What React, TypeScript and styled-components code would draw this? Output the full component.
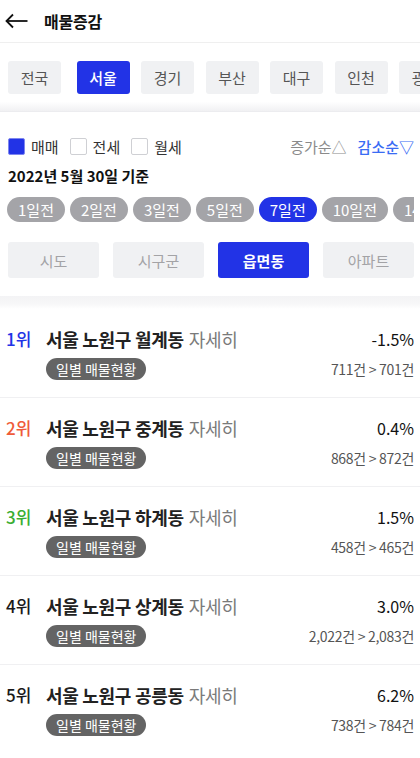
import styled, { createGlobalStyle } from 'styled-components'

const GlobalStyle = createGlobalStyle`
  * {
    box-sizing: border-box;
  }
  body {
    margin: 0;
    background: #fff;
    font-family: "Noto Sans CJK KR", "Noto Sans", sans-serif;
    color: #111;
  }
`

const BLUE = '#2233e6'

const Page = styled.div`
  width: 420px;
  overflow: hidden;
`

const Header = styled.header`
  height: 43px;
  display: flex;
  align-items: center;
  gap: 16px;
  padding: 0 5px;
  border-bottom: 1px solid #efefef;
`

const HeaderTitle = styled.h1`
  margin: 0;
  font-size: 16px;
  font-weight: 700;
  line-height: 1;
  letter-spacing: -0.2px;
`

const RegionList = styled.div`
  display: flex;
  gap: 11.5px;
  padding: 18px 0 0 8px;
  overflow: hidden;

  & > :first-child {
    margin-right: 4px;
  }
`

const RegionTab = styled.div<{ $active?: boolean }>`
  flex: 0 0 53px;
  height: 33px;
  display: flex;
  align-items: center;
  justify-content: center;
  border-radius: 3px;
  font-size: 15px;
  background: ${p => (p.$active ? BLUE : '#f0f1f3')};
  color: ${p => (p.$active ? '#fff' : '#555')};
  font-weight: ${p => (p.$active ? 500 : 400)};
`

const BandTop = styled.div`
  height: 18px;
  background: linear-gradient(#fff 0%, #fff 45%, #f1f1f3 100%);
  border-bottom: 1px solid #ececef;
`

const BandBottom = styled.div`
  height: 13px;
  background: linear-gradient(#f3f3f5 0%, #f7f7f8 60%, #fff 100%);
`

const Filters = styled.section`
  padding: 23px 6px 18px 8px;
`

const FilterRow = styled.div`
  display: flex;
  align-items: center;
  justify-content: space-between;
  height: 22px;
`

const Checks = styled.div`
  display: flex;
  align-items: center;
  gap: 11px;
`

const CheckItem = styled.label`
  display: flex;
  align-items: center;
  gap: 6px;
  font-size: 15px;
  color: #333;
`

const Box = styled.span<{ $checked?: boolean }>`
  width: 17px;
  height: 17px;
  border-radius: 2px;
  border: 1.5px solid ${p => (p.$checked ? '#7e86ef' : '#cfd0d4')};
  background: ${p => (p.$checked ? BLUE : '#fff')};
`

const Sorts = styled.div`
  display: flex;
  gap: 11px;
  font-size: 15px;
`

const SortLink = styled.span<{ $active?: boolean }>`
  color: ${p => (p.$active ? '#3a6cf4' : '#8a8a8a')};
  font-weight: ${p => (p.$active ? 500 : 400)};
`

const DateLine = styled.div`
  margin-top: 8px;
  font-size: 15px;
  font-weight: 700;
  line-height: 22px;
`

const Pills = styled.div`
  display: flex;
  gap: 5px;
  margin: 10px 0 0 -1px;
  width: 407px;
  overflow: hidden;
`

const Pill = styled.div<{ $active?: boolean }>`
  flex: 0 0 auto;
  height: 25px;
  padding: 0 11px;
  border-radius: 13px;
  display: flex;
  align-items: center;
  font-size: 15px;
  color: #fff;
  background: ${p => (p.$active ? BLUE : '#a4a4a8')};
`

const LevelTabs = styled.div`
  display: grid;
  grid-template-columns: repeat(4, 1fr);
  gap: 14px;
  margin-top: 20px;
`

const LevelTab = styled.div<{ $active?: boolean }>`
  height: 36px;
  border-radius: 3px;
  display: flex;
  align-items: center;
  justify-content: center;
  font-size: 15px;
  background: ${p => (p.$active ? BLUE : '#f0f1f3')};
  color: ${p => (p.$active ? '#fff' : '#a3a3a6')};
  font-weight: ${p => (p.$active ? 700 : 400)};
`

const Item = styled.div`
  display: grid;
  grid-template-columns: 40px 1fr auto;
  grid-template-rows: 24px 22px;
  row-gap: 7px;
  padding: 18px 6px 17px 6px;
  border-bottom: 1px solid #f0f0f2;

  &:last-child {
    border-bottom: none;
  }
`

const Rank = styled.div<{ $color: string }>`
  font-size: 17px;
  font-weight: 500;
  line-height: 24px;
  color: ${p => p.$color};
`

const Name = styled.div`
  font-size: 18px;
  font-weight: 700;
  line-height: 24px;
  color: #222;
  letter-spacing: -0.3px;
  white-space: nowrap;
`

const More = styled.span`
  font-weight: 400;
  color: #7a7a7a;
  margin-left: 5px;
`

const Rate = styled.div`
  font-size: 16px;
  line-height: 24px;
  text-align: right;
  color: #111;
`

const Badge = styled.span`
  grid-column: 2;
  justify-self: start;
  height: 22px;
  padding: 0 10px;
  border-radius: 11px;
  background: #646464;
  color: #fff;
  font-size: 14px;
  display: flex;
  align-items: center;
`

const Count = styled.div`
  font-size: 14px;
  line-height: 22px;
  color: #555;
  text-align: right;
  letter-spacing: -0.3px;
`

const BackArrow = () => (
  <svg width="23" height="16" viewBox="0 0 23 16" fill="none" stroke="#111" strokeWidth="1.8">
    <path d="M1.5 8 H22.5" />
    <path d="M8 1.5 L1.5 8 L8 14.5" strokeLinejoin="miter" />
  </svg>
)

const regions = ['전국', '서울', '경기', '부산', '대구', '인천', '광주']
const days = ['1일전', '2일전', '3일전', '5일전', '7일전', '10일전', '14일전']
const levels = ['시도', '시구군', '읍면동', '아파트']

const rows = [
  { rank: 1, color: BLUE, dong: '월계동', rate: '-1.5%', count: '711건 > 701건' },
  { rank: 2, color: '#ef5b3a', dong: '중계동', rate: '0.4%', count: '868건 > 872건' },
  { rank: 3, color: '#3aae33', dong: '하계동', rate: '1.5%', count: '458건 > 465건' },
  { rank: 4, color: '#1a1a1a', dong: '상계동', rate: '3.0%', count: '2,022건 > 2,083건' },
  { rank: 5, color: '#1a1a1a', dong: '공릉동', rate: '6.2%', count: '738건 > 784건' },
]

const App = () => {
  return (
    <Page>
      <GlobalStyle />
      <Header>
        <BackArrow />
        <HeaderTitle>매물증감</HeaderTitle>
      </Header>
      <RegionList>
        {regions.map(r => (
          <RegionTab key={r} $active={r === '서울'}>
            {r}
          </RegionTab>
        ))}
      </RegionList>
      <BandTop />
      <Filters>
        <FilterRow>
          <Checks>
            <CheckItem>
              <Box $checked />
              매매
            </CheckItem>
            <CheckItem>
              <Box />
              전세
            </CheckItem>
            <CheckItem>
              <Box />
              월세
            </CheckItem>
          </Checks>
          <Sorts>
            <SortLink>증가순△</SortLink>
            <SortLink $active>감소순▽</SortLink>
          </Sorts>
        </FilterRow>
        <DateLine>2022년 5월 30일 기준</DateLine>
        <Pills>
          {days.map(d => (
            <Pill key={d} $active={d === '7일전'}>
              {d}
            </Pill>
          ))}
        </Pills>
        <LevelTabs>
          {levels.map(l => (
            <LevelTab key={l} $active={l === '읍면동'}>
              {l}
            </LevelTab>
          ))}
        </LevelTabs>
      </Filters>
      <BandBottom />
      {rows.map(row => (
        <Item key={row.rank}>
          <Rank $color={row.color}>{row.rank}위</Rank>
          <Name>
            서울 노원구 {row.dong}
            <More>자세히</More>
          </Name>
          <Rate>{row.rate}</Rate>
          <Badge>일별 매물현황</Badge>
          <Count>{row.count}</Count>
        </Item>
      ))}
    </Page>
  )
}

export default App
